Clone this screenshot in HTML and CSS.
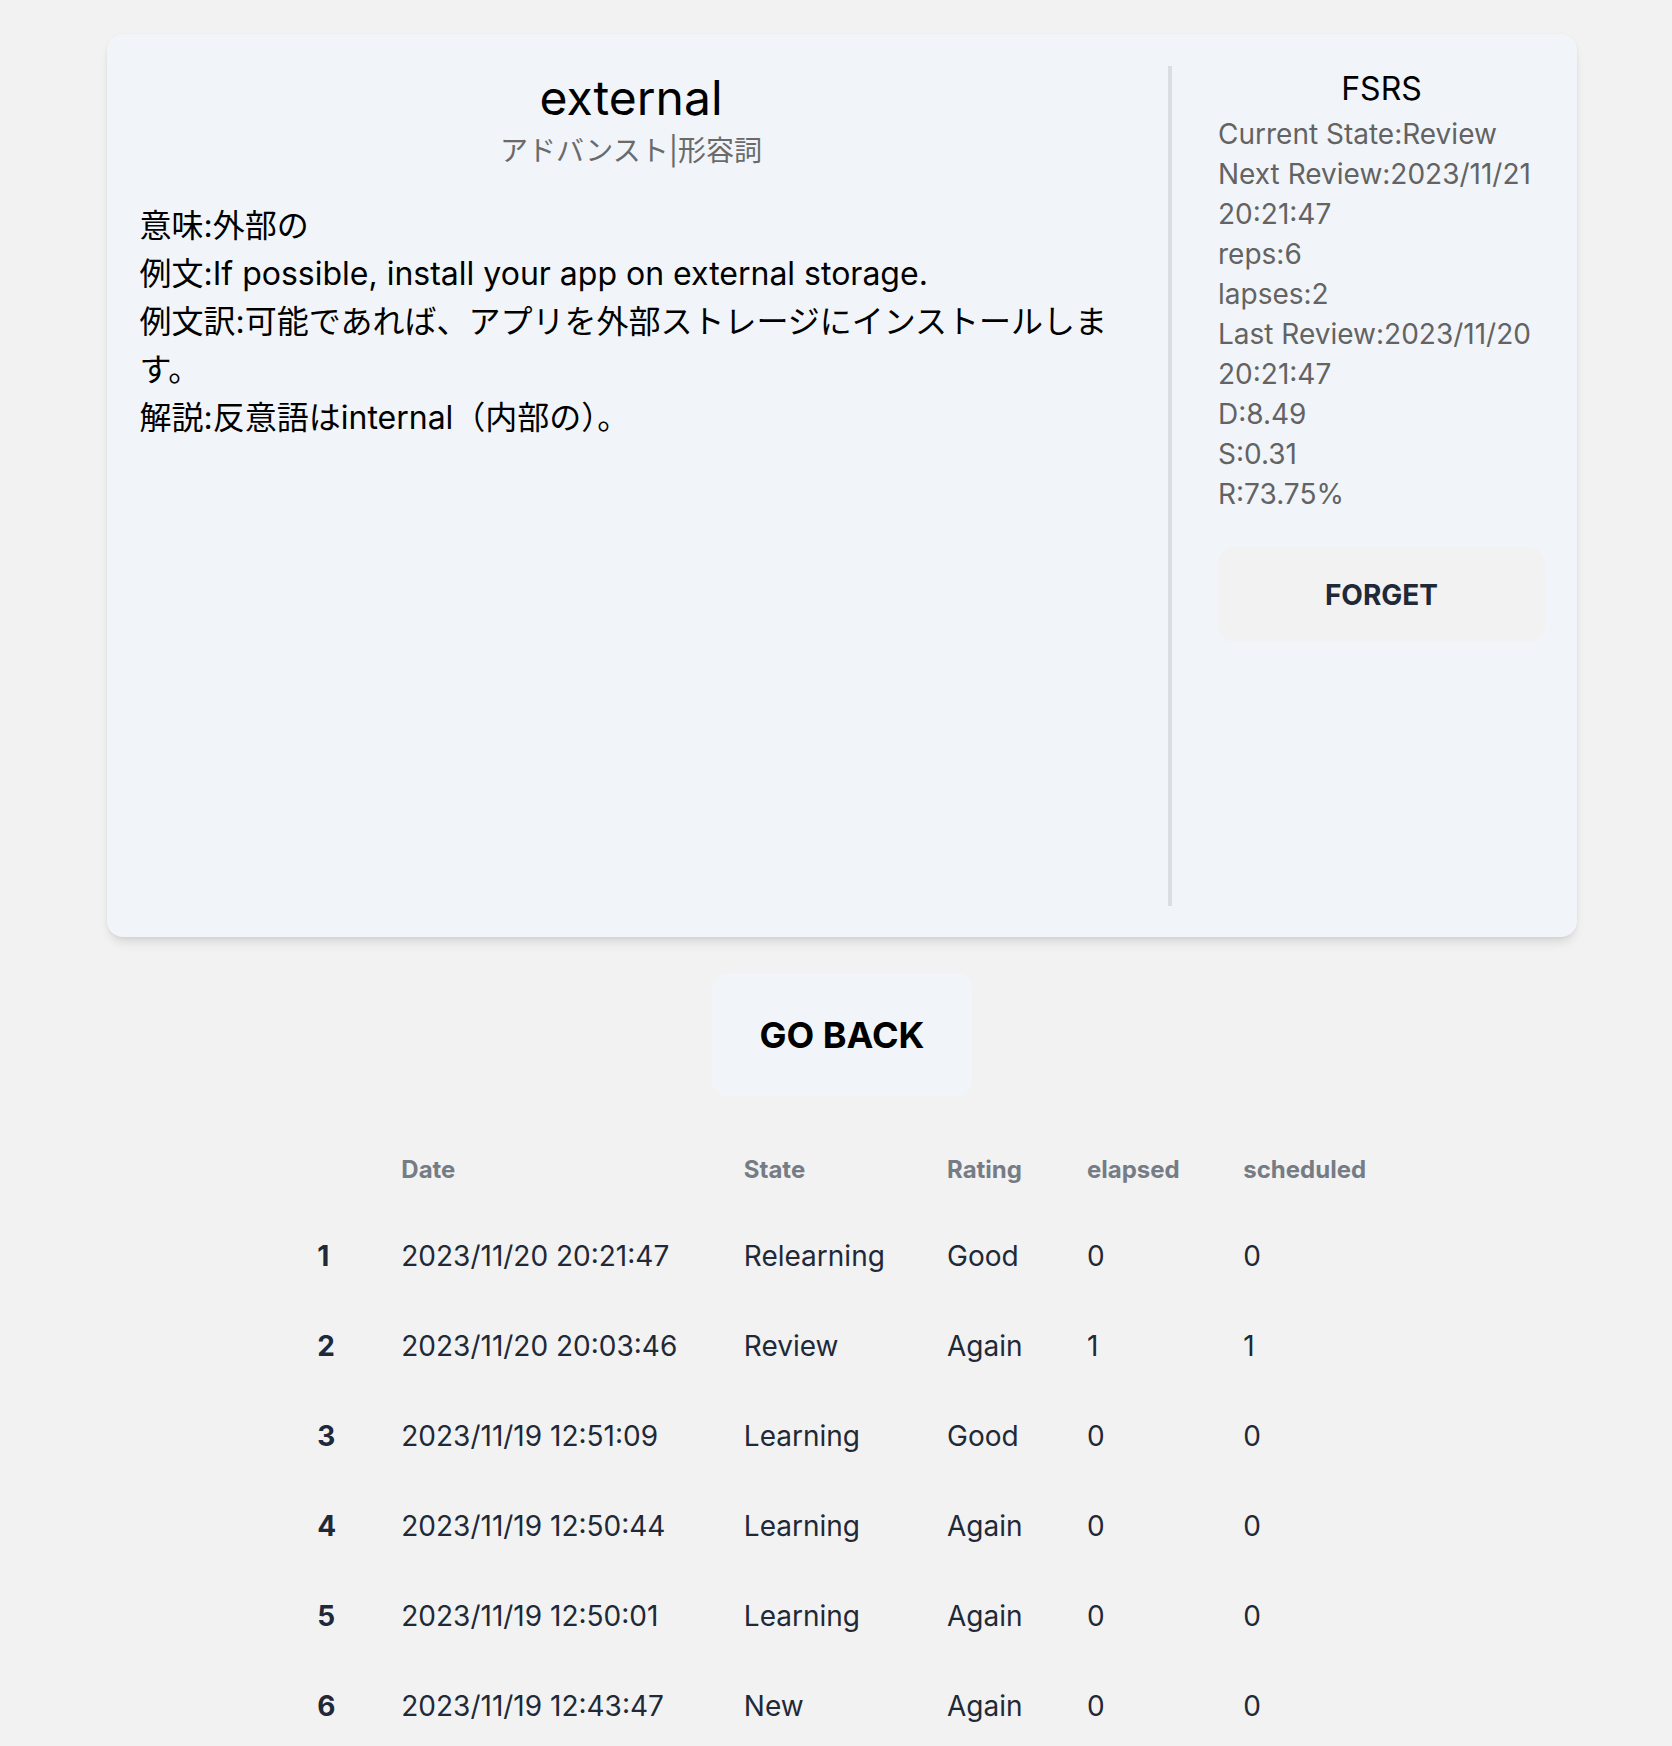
FILE: index.html
```html
<!DOCTYPE html>
<html lang="ja">
<head>
<meta charset="utf-8">
<title>external</title>
<link rel="stylesheet" href="styles.css">
</head>
<body>
<div class="page">
  <section class="card">
    <div class="word-col">
      <h1 class="word">external</h1>
      <div class="meta">アドバンスト|形容詞</div>
      <div class="body-text">
        <div>意味:外部の</div>
        <div>例文:If possible, install your app on external storage.</div>
        <div>例文訳:可能であれば、アプリを外部ストレージにインストールします。</div>
        <div>解説:反意語はinternal（内部の）。</div>
      </div>
    </div>
    <div class="divider"></div>
    <aside class="fsrs-col">
      <h2 class="fsrs-title">FSRS</h2>
      <div class="fsrs-line">Current State:Review</div>
      <div class="fsrs-line">Next Review:2023/11/21 20:21:47</div>
      <div class="fsrs-line">reps:6</div>
      <div class="fsrs-line">lapses:2</div>
      <div class="fsrs-line">Last Review:2023/11/20 20:21:47</div>
      <div class="fsrs-line">D:8.49</div>
      <div class="fsrs-line">S:0.31</div>
      <div class="fsrs-line">R:73.75%</div>
      <button class="forget-btn">FORGET</button>
    </aside>
  </section>

  <div class="back-row">
    <button class="back-btn">GO BACK</button>
  </div>

  <table class="log-table">
    <colgroup>
      <col class="c-idx"><col class="c-date"><col class="c-state"><col class="c-rating"><col class="c-elapsed"><col class="c-sched">
    </colgroup>
    <thead>
      <tr><th></th><th>Date</th><th>State</th><th>Rating</th><th>elapsed</th><th>scheduled</th></tr>
    </thead>
    <tbody>
      <tr><th>1</th><td>2023/11/20 20:21:47</td><td>Relearning</td><td>Good</td><td>0</td><td>0</td></tr>
      <tr><th>2</th><td>2023/11/20 20:03:46</td><td>Review</td><td>Again</td><td>1</td><td>1</td></tr>
      <tr><th>3</th><td>2023/11/19 12:51:09</td><td>Learning</td><td>Good</td><td>0</td><td>0</td></tr>
      <tr><th>4</th><td>2023/11/19 12:50:44</td><td>Learning</td><td>Again</td><td>0</td><td>0</td></tr>
      <tr><th>5</th><td>2023/11/19 12:50:01</td><td>Learning</td><td>Again</td><td>0</td><td>0</td></tr>
      <tr><th>6</th><td>2023/11/19 12:43:47</td><td>New</td><td>Again</td><td>0</td><td>0</td></tr>
    </tbody>
  </table>
</div>
</body>
</html>
```

FILE: styles.css
```css
* { box-sizing: border-box; }

html, body {
  margin: 0;
  padding: 0;
  background: #f2f2f2;
  font-family: Inter, "Noto Sans CJK JP", "Noto Sans", sans-serif;
  color: #000;
}

.page {
  width: 1470px;
  margin: 0 0 0 107px;
  padding-top: 34px;
}

.card {
  display: flex;
  height: 903px;
  padding: 32px 32px 31px 28px;
  background: #f1f5f9;
  border-radius: 16px;
  box-shadow: 0 8px 12px -4px rgba(0, 0, 0, 0.13), 0 1px 4px rgba(0, 0, 0, 0.05);
}

.word-col {
  width: 992px;
  flex: none;
}

.word {
  margin: 3.5px 0 0;
  font-size: 48px;
  line-height: 56px;
  font-weight: 400;
  text-align: center;
}

.meta {
  margin-top: 5px;
  font-size: 28px;
  line-height: 40px;
  color: #6a6a6a;
  text-align: center;
}

.body-text {
  margin-top: 31px;
  padding-left: 4.5px;
  font-size: 32px;
  line-height: 48px;
  color: #000;
}

.divider {
  flex: none;
  width: 4px;
  margin-left: 41px;
  margin-right: 46px;
  background: #dadde2;
}

.fsrs-col {
  width: 327px;
  flex: none;
  display: flex;
  flex-direction: column;
}

.fsrs-title {
  margin: 0 0 3px;
  font-size: 32px;
  line-height: 45px;
  font-weight: 400;
  text-align: center;
}

.fsrs-line {
  font-size: 28px;
  line-height: 40px;
  color: #636363;
}

.forget-btn {
  margin-top: 33px;
  height: 95px;
  width: 327px;
  border: none;
  border-radius: 16px;
  background: #f2f2f2;
  font-family: inherit;
  font-size: 28px;
  font-weight: 700;
  color: #1f2937;
}

.back-row {
  display: flex;
  justify-content: center;
  margin-top: 36px;
}

.back-btn {
  width: 260px;
  height: 123px;
  border: none;
  border-radius: 16px;
  background: #f1f5f9;
  font-family: inherit;
  font-size: 36px;
  font-weight: 700;
  color: #000;
}

.log-table {
  margin: 33px auto 0;
  width: 1093.4px;
  table-layout: fixed;
  border-collapse: collapse;
  color: #1f2937;
}

.c-idx { width: 84px; }
.c-date { width: 342.5px; }
.c-state { width: 203.2px; }
.c-rating { width: 140px; }
.c-elapsed { width: 156.3px; }
.c-sched { width: 167.4px; }

.log-table th,
.log-table td {
  text-align: left;
  padding: 25px 0 25px 22px;
  white-space: nowrap;
}

.log-table thead th {
  font-size: 24px;
  line-height: 32px;
  font-weight: 700;
  color: #767c85;
}

.log-table tbody th,
.log-table tbody td {
  font-size: 28px;
  line-height: 40px;
}

.log-table tbody th {
  font-weight: 700;
}

.log-table tbody td {
  font-weight: 400;
}
```
